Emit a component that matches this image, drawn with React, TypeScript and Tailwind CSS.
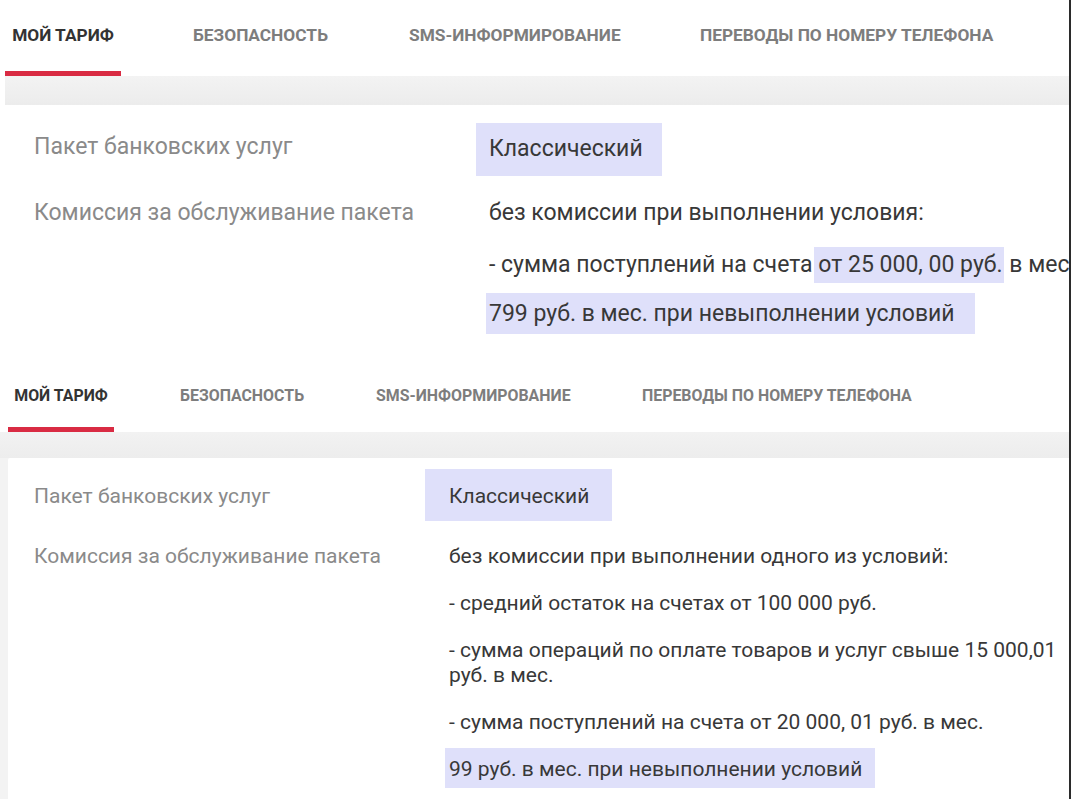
import React from "react";

const font = { fontFamily: "Roboto, 'Noto Sans', sans-serif" };

function TopSection() {
  return (
    <div className="h-[358px] bg-white flex flex-col">
      {/* tabs */}
      <div className="h-[76px] flex pl-[5px] shrink-0">
        <div className="w-[116px] flex flex-col">
          <div className="h-[71px] flex items-center justify-center text-[17.3px] font-bold text-[#333333] whitespace-nowrap">МОЙ ТАРИФ</div>
          <div className="h-[5px] bg-[#d92b43]" />
        </div>
        <div className="w-[72px]" />
        <div className="w-[216px] h-[71px] flex items-center text-[17.3px] font-bold text-[#7d7d7d] whitespace-nowrap">БЕЗОПАСНОСТЬ</div>
        <div className="w-[291px] h-[71px] flex items-center text-[17.3px] font-bold text-[#7d7d7d] whitespace-nowrap">SMS-ИНФОРМИРОВАНИЕ</div>
        <div className="h-[71px] flex items-center text-[17.3px] font-bold text-[#7d7d7d] whitespace-nowrap">ПЕРЕВОДЫ ПО НОМЕРУ ТЕЛЕФОНА</div>
      </div>
      <div className="h-[29px] ml-[5px] bg-gradient-to-b from-[#f3f3f3] to-[#ececec] shrink-0" />
      {/* card */}
      <div className="flex-1 pl-[34px] pt-[18px] overflow-hidden">
        <div className="flex items-center">
          <div className="w-[442px] shrink-0 text-[23px] text-[#8a8a8a] leading-[27px] -mt-[6px] whitespace-nowrap">Пакет банковских услуг</div>
          <div className="h-[53px] flex items-center pl-[13px] pr-[19px] bg-[#dfe0fa] text-[23px] text-[#383838]">Классический</div>
        </div>
        <div className="flex mt-[23px]">
          <div className="w-[455px] shrink-0 text-[23px] text-[#8a8a8a] leading-[27px] whitespace-nowrap">Комиссия за обслуживание пакета</div>
          <div className="flex-1 min-w-0 text-[23px] text-[#383838] leading-[27px] whitespace-nowrap">
            <div>без комиссии при выполнении условия:</div>
            <div className="mt-[25px]">
              - сумма поступлений на счета{" "}
              <span className="inline-block bg-[#dfe0fa] leading-[36px] -my-[4px] pr-[1px] -ml-[4px] pl-[4px]">от 25 000, 00 руб.</span>
              {" "}в мес.
            </div>
            <div className="mt-[14px] -ml-[3px] w-[489px] h-[41px] pl-[3px] flex items-center bg-[#dfe0fa]">
              799 руб. в мес. при невыполнении условий
            </div>
          </div>
        </div>
      </div>
    </div>
  );
}

function BottomSection() {
  return (
    <div className="flex-1 flex flex-col bg-[#f3f3f3]">
      <div className="h-[74px] flex pl-[8px] bg-white shrink-0">
        <div className="w-[106px] flex flex-col">
          <div className="h-[69px] pt-[7px] flex items-center justify-center text-[15.9px] font-bold text-[#333333] whitespace-nowrap">МОЙ ТАРИФ</div>
          <div className="h-[5px] bg-[#d92b43]" />
        </div>
        <div className="w-[66px]" />
        <div className="w-[196px] h-[69px] pt-[7px] flex items-center text-[15.9px] font-bold text-[#7d7d7d] whitespace-nowrap">БЕЗОПАСНОСТЬ</div>
        <div className="w-[266px] h-[69px] pt-[7px] flex items-center text-[15.9px] font-bold text-[#7d7d7d] whitespace-nowrap">SMS-ИНФОРМИРОВАНИЕ</div>
        <div className="h-[69px] pt-[7px] flex items-center text-[15.9px] font-bold text-[#7d7d7d] whitespace-nowrap">ПЕРЕВОДЫ ПО НОМЕРУ ТЕЛЕФОНА</div>
      </div>
      <div className="h-[26px] bg-gradient-to-b from-[#f2f2f2] to-[#ededed] shrink-0" />
      <div className="flex-1 ml-[8px] bg-white pl-[26px] pt-[11px] overflow-hidden rounded-tl-[2px]">
        <div className="flex items-center">
          <div className="w-[391px] shrink-0 text-[21px] text-[#8a8a8a] leading-[25px] mt-[3px] whitespace-nowrap">Пакет банковских услуг</div>
          <div className="h-[52px] flex items-center pl-[24px] pr-[23px] pt-[4px] bg-[#dfe0fa] text-[21px] text-[#383838]">Классический</div>
        </div>
        <div className="flex mt-[23px]">
          <div className="w-[415px] shrink-0 text-[21px] text-[#8a8a8a] leading-[25px] whitespace-nowrap">Комиссия за обслуживание пакета</div>
          <div className="w-[620px] text-[21px] text-[#383838] leading-[25px] whitespace-nowrap">
            <div>без комиссии при выполнении одного из условий:</div>
            <div className="mt-[22px]">- средний остаток на счетах от 100 000 руб.</div>
            <div className="mt-[22px]">- сумма операций по оплате товаров и услуг свыше 15 000,01<br />руб. в мес.</div>
            <div className="mt-[22px]">- сумма поступлений на счета от 20 000, 01 руб. в мес.</div>
            <div className="mt-[13px] -ml-[4px] w-[430px] h-[40px] pl-[4px] pt-[2px] flex items-center bg-[#dfe0fa]">
              99 руб. в мес. при невыполнении условий
            </div>
          </div>
        </div>
      </div>
    </div>
  );
}

export default function App() {
  return (
    <div className="w-[1071px] h-[799px] overflow-hidden flex bg-white" style={font}>
      <div className="flex-1 flex flex-col min-w-0">
        <TopSection />
        <BottomSection />
      </div>
      <div className="w-[2px] bg-[#2b2b2b] shrink-0" />
    </div>
  );
}
